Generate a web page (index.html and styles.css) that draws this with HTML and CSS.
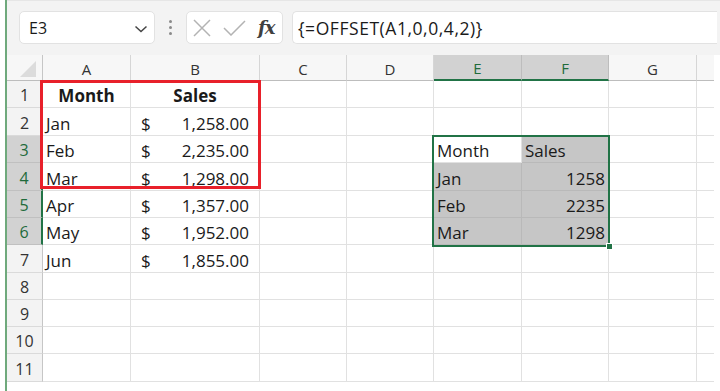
FILE: index.html
```html
<!DOCTYPE html>
<html>
<head>
<meta charset="utf-8">
<link rel="stylesheet" href="styles.css">
</head>
<body>
<div class="app">
  <div class="toolbar">
    <div class="namebox">
      <span class="ref">E3</span>
      <svg class="chev" width="14" height="8" viewBox="0 0 14 8"><path d="M1.5 1.5 L7 6.5 L12.5 1.5" fill="none" stroke="#444" stroke-width="1.5"/></svg>
    </div>
    <div class="dots"><i></i><i></i><i></i></div>
    <div class="fxbox">
      <svg class="ic-x" width="18" height="18" viewBox="0 0 18 18"><path d="M1 1 L17 17 M17 1 L1 17" stroke="#b3b3b3" stroke-width="1.5" fill="none"/></svg>
      <svg class="ic-ok" width="23" height="16" viewBox="0 0 23 16"><path d="M1 8 L8 15 L22 1" stroke="#b3b3b3" stroke-width="1.5" fill="none"/></svg>
      <span class="fx">fx</span>
    </div>
    <div class="formula">{=OFFSET(A1,0,0,4,2)}</div>
  </div>
  <div class="sheet">
    <div class="grid">
      <div class="corner"><span class="tri"></span></div>
      <div class="ch">A</div><div class="ch">B</div><div class="ch">C</div><div class="ch">D</div>
      <div class="ch sel-h">E</div><div class="ch sel-h">F</div><div class="ch">G</div><div class="ch last"></div>

      <div class="rh">1</div>
      <div class="c center b">Month</div><div class="c center b">Sales</div><div class="c"></div><div class="c"></div><div class="c"></div><div class="c"></div><div class="c"></div><div class="c last"></div>

      <div class="rh">2</div>
      <div class="c">Jan</div><div class="c acc"><span>$</span><span>1,258.00</span></div><div class="c"></div><div class="c"></div><div class="c"></div><div class="c"></div><div class="c"></div><div class="c last"></div>

      <div class="rh sel-r">3</div>
      <div class="c">Feb</div><div class="c acc"><span>$</span><span>2,235.00</span></div><div class="c"></div><div class="c"></div><div class="c">Month</div><div class="c g">Sales</div><div class="c"></div><div class="c last"></div>

      <div class="rh sel-r">4</div>
      <div class="c">Mar</div><div class="c acc"><span>$</span><span>1,298.00</span></div><div class="c"></div><div class="c"></div><div class="c g">Jan</div><div class="c g right">1258</div><div class="c"></div><div class="c last"></div>

      <div class="rh sel-r">5</div>
      <div class="c">Apr</div><div class="c acc"><span>$</span><span>1,357.00</span></div><div class="c"></div><div class="c"></div><div class="c g">Feb</div><div class="c g right">2235</div><div class="c"></div><div class="c last"></div>

      <div class="rh sel-r">6</div>
      <div class="c">May</div><div class="c acc"><span>$</span><span>1,952.00</span></div><div class="c"></div><div class="c"></div><div class="c g">Mar</div><div class="c g right">1298</div><div class="c"></div><div class="c last"></div>

      <div class="rh">7</div>
      <div class="c">Jun</div><div class="c acc"><span>$</span><span>1,855.00</span></div><div class="c"></div><div class="c"></div><div class="c"></div><div class="c"></div><div class="c"></div><div class="c last"></div>

      <div class="rh">8</div>
      <div class="c"></div><div class="c"></div><div class="c"></div><div class="c"></div><div class="c"></div><div class="c"></div><div class="c"></div><div class="c last"></div>

      <div class="rh">9</div>
      <div class="c"></div><div class="c"></div><div class="c"></div><div class="c"></div><div class="c"></div><div class="c"></div><div class="c"></div><div class="c last"></div>

      <div class="rh">10</div>
      <div class="c"></div><div class="c"></div><div class="c"></div><div class="c"></div><div class="c"></div><div class="c"></div><div class="c"></div><div class="c last"></div>

      <div class="rh">11</div>
      <div class="c"></div><div class="c"></div><div class="c"></div><div class="c"></div><div class="c"></div><div class="c"></div><div class="c"></div><div class="c last"></div>
    </div>
    <div class="redbox"></div>
    <div class="selbox"><span class="handle"></span></div>
  </div>
</div>
</body>
</html>
```

FILE: styles.css
```css
* { box-sizing: border-box; }
html, body { margin: 0; padding: 0; background: #ffffff; }
body { width: 720px; height: 391px; overflow: hidden; font-family: "Open Sans", "Liberation Sans", sans-serif; color: #1a1a1a; }

.app {
  margin-left: 5px;
  border-left: 2px solid #6fa97c;
  height: 391px;
}

.toolbar {
  height: 55px;
  background: #f3f3f3;
  border-top: 1px solid #e6e6e6;
  display: flex;
  align-items: flex-start;
  padding: 10px 0 0 12px;
}

.namebox {
  width: 136px;
  height: 33px;
  background: #fff;
  border: 1px solid #e2e2e2;
  border-radius: 5px;
  display: flex;
  align-items: center;
  justify-content: space-between;
  padding: 1px 6px 0 9px;
  font-size: 16px;
}
.chev { margin-top: 1px; }

.dots {
  width: 31px;
  height: 33px;
  display: flex;
  flex-direction: column;
  align-items: center;
  justify-content: center;
  gap: 3px;
}
.dots i { display: block; width: 3px; height: 3px; border-radius: 50%; background: #8a8a8a; }

.fxbox {
  width: 97px;
  height: 33px;
  background: #fff;
  border: 1px solid #e2e2e2;
  border-radius: 5px;
  display: flex;
  align-items: center;
  padding: 0 0 0 6px;
}
.ic-x { margin-right: 12px; }
.ic-ok { margin-right: 12px; }
.fx {
  font-family: "DejaVu Serif", "Liberation Serif", serif;
  font-style: italic;
  font-weight: bold;
  font-size: 18px;
  color: #404040;
  letter-spacing: -1px;
}

.formula {
  margin-left: 9px;
  width: 425px;
  height: 33px;
  background: #fff;
  border: 1px solid #e2e2e2;
  border-right: none;
  border-radius: 5px 0 0 5px;
  display: flex;
  align-items: center;
  padding: 1px 0 0 5px;
  font-size: 17.5px;
  letter-spacing: 0.55px;
  color: #1a1a1a;
}

.sheet { position: relative; }

.grid {
  display: grid;
  grid-template-columns: 36px 88px 129px 87px 87px 88px 87px 88px 17px;
  grid-template-rows: 26px 27px 28px 27px 28px 27px 27px 28px 27px 27px 27px 28px;
}

.corner {
  background: #f7f7f7;
  border-right: 1px solid #c6c6c6;
  border-bottom: 1px solid #bdbdbd;
  position: relative;
}
.tri {
  position: absolute;
  right: 6px;
  bottom: 3px;
  width: 0; height: 0;
  border-left: 16px solid transparent;
  border-bottom: 16px solid #dcdcdc;
}

.ch {
  background: #f7f7f7;
  border-right: 1px solid #d6d6d6;
  border-bottom: 1px solid #bdbdbd;
  display: flex;
  align-items: center;
  justify-content: center;
  font-size: 15px;
  color: #333;
  padding-top: 2px;
}
.ch.last { border-right: none; }
.ch.sel-h {
  background: #d2d2d2;
  color: #1f6b3b;
  border-right-color: #bdbdbd;
  border-bottom: 2px solid #217346;
}

.rh {
  background: #f3f3f3;
  border-right: 1px solid #c6c6c6;
  border-bottom: 1px solid #dadada;
  display: flex;
  align-items: center;
  justify-content: center;
  font-size: 16px;
  color: #333;
  padding-top: 2px;
}
.rh.sel-r {
  background: #d2d2d2;
  color: #1f6b3b;
  border-right: 2px solid #217346;
  border-bottom-color: #c0c0c0;
}

.c {
  border-right: 1px solid #e1e1e1;
  border-bottom: 1px solid #e1e1e1;
  display: flex;
  align-items: flex-end;
  padding: 0 3px 0 3px;
  font-size: 17px;
  line-height: 22px;
  white-space: nowrap;
  overflow: hidden;
}
.c.last { border-right: none; }
.c.center { justify-content: center; }
.c.b { font-weight: bold; }
.c.right { justify-content: flex-end; }
.c.g { background: #c6c6c6; border-color: #b9b9b9; }
.c.acc { justify-content: space-between; padding: 0 10px 0 10px; }

.redbox {
  position: absolute;
  left: 33px;
  top: 25px;
  width: 221px;
  height: 109px;
  border: 3px solid #e8202a;
}

.selbox {
  position: absolute;
  left: 425px;
  top: 80px;
  width: 178px;
  height: 112px;
  border: 2px solid #217346;
}
.handle {
  position: absolute;
  right: -5px;
  bottom: -5px;
  width: 7px;
  height: 7px;
  background: #217346;
  border: 1px solid #fff;
}
```
